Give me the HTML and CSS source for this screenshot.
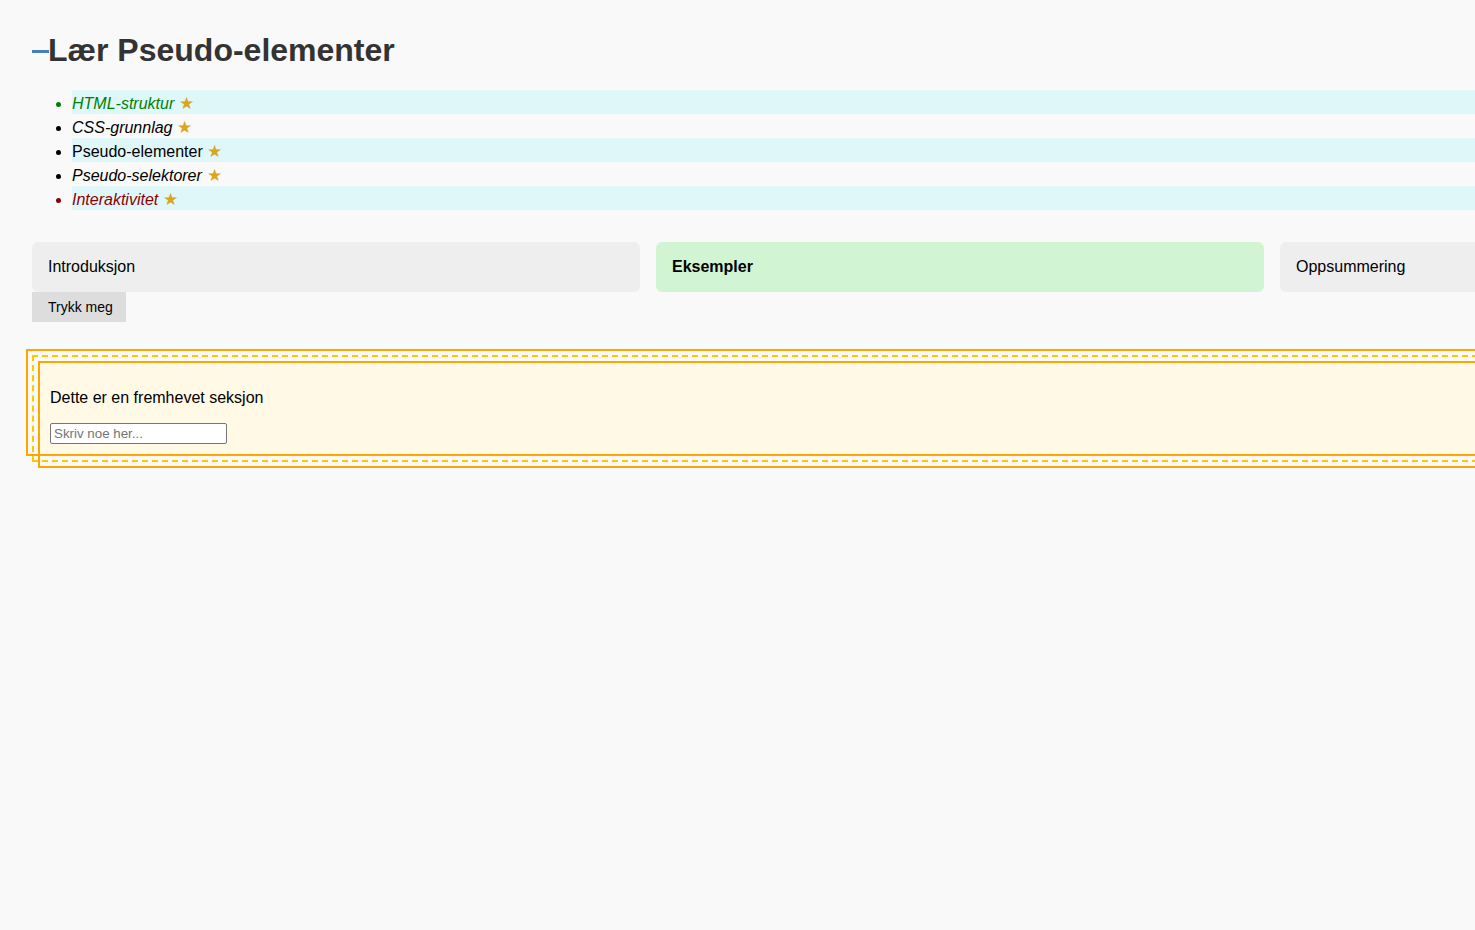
FILE: index.html
```html
<!DOCTYPE html>
<html lang="no">
<head>
<meta charset="utf-8">
<title>Lær Pseudo-elementer</title>
<link rel="stylesheet" href="styles.css">
</head>
<body>
<div class="page">
  <h1 class="title">Lær Pseudo-elementer</h1>
  <ul class="topics">
    <li class="topic topic-done">HTML-struktur</li>
    <li class="topic topic-italic">CSS-grunnlag</li>
    <li class="topic">Pseudo-elementer</li>
    <li class="topic topic-italic">Pseudo-selektorer</li>
    <li class="topic topic-hard">Interaktivitet</li>
  </ul>
  <div class="tabs">
    <div class="tab">Introduksjon</div>
    <div class="tab tab-active">Eksempler</div>
    <div class="tab">Oppsummering</div>
  </div>
  <button class="btn" type="button">Trykk meg</button>
  <section class="highlight">
    <p class="highlight-text">Dette er en fremhevet seksjon</p>
    <input class="field" type="text" placeholder="Skriv noe her...">
  </section>
</div>
</body>
</html>
```

FILE: styles.css
```css
html {
  overflow: hidden;
}

body {
  margin: 0;
  padding: 32px;
  background: #f9f9f9;
  color: #000;
  font-family: "Liberation Sans", Arial, sans-serif;
  font-size: 16px;
}

.page {
  width: 1856px;
}

.title {
  margin: 0 0 21px;
  font-size: 32px;
  font-weight: bold;
  color: #333;
  line-height: 37px;
}

.title::before {
  content: "";
  display: inline-block;
  width: 17px;
  height: 3px;
  background: #4682b4;
  vertical-align: middle;
  margin-right: -1px;
  position: relative;
  top: -1px;
}

.topics {
  margin: 0 0 32px;
  padding: 0 0 0 40px;
}

.topic {
  padding: 5px 0 1px;
  line-height: 18px;
}

.topic:nth-child(odd) {
  background: #e0f7fa;
}

.topic::after {
  content: "\00a0\2605";
  color: #daa520;
  font-style: normal;
  font-size: 17px;
  line-height: 18px;
}

.topic-italic {
  font-style: italic;
}

.topic-done {
  color: #008000;
  font-style: italic;
}

.topic-hard {
  color: #8b0000;
  font-style: italic;
}

.tabs {
  display: flex;
  gap: 16px;
}

.tab {
  flex: 0 0 608px;
  box-sizing: border-box;
  height: 50px;
  padding: 16px;
  line-height: 18px;
  background: #eeeeee;
  border-radius: 6px;
}

.tab-active {
  background: #d1f4d3;
  font-weight: bold;
}

.btn {
  display: block;
  box-sizing: border-box;
  width: 94px;
  height: 30px;
  padding: 0 0 0 16px;
  text-align: left;
  border: none;
  border-radius: 0;
  background: #dddddd;
  color: #000;
  font-family: "Liberation Sans", Arial, sans-serif;
  font-size: 14px;
}

.highlight {
  position: relative;
  margin-top: 33px;
  padding: 16px;
  border: 2px dashed #ffc800;
  background: #fff9e6;
  box-shadow: inset 0 0 0 6px #f9f9f9;
}

.highlight::before,
.highlight::after {
  content: "";
  position: absolute;
  width: 100%;
  height: 100%;
  border: 2px solid #ffa500;
}

.highlight::before {
  left: -8px;
  top: -8px;
}

.highlight::after {
  left: 4px;
  top: 4px;
}

.highlight-text {
  margin: 16px 0;
  line-height: 18px;
}

.field {
  position: relative;
  z-index: 1;
  box-sizing: border-box;
  width: 177px;
  height: 21px;
  padding: 1px 3px;
  border: 1px solid #767676;
  border-radius: 2px;
  background: #fff;
  font-family: "Liberation Sans", Arial, sans-serif;
  font-size: 13.33px;
}

.field::placeholder {
  color: #757575;
}
```
